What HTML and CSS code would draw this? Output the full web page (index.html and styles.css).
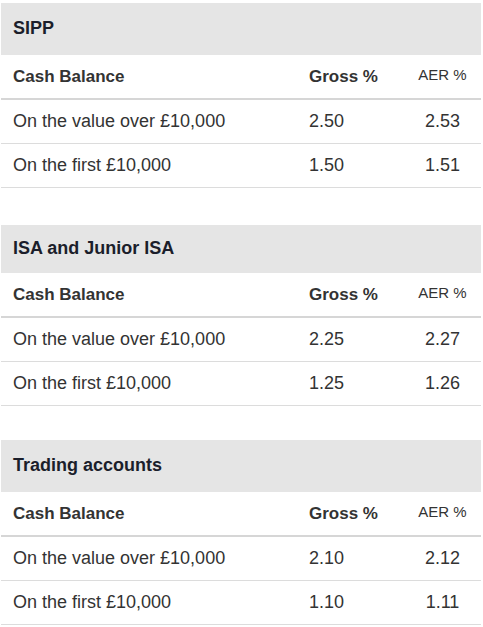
FILE: index.html
```html
<!DOCTYPE html>
<html lang="en">
<head>
<meta charset="utf-8">
<title>Cash rates</title>
<link rel="stylesheet" href="styles.css">
</head>
<body>
<div class="page">
  <section class="rates rates-first">
    <h2 class="rates-title">SIPP</h2>
    <div class="row row-head">
      <div class="cell cell-label">Cash Balance</div>
      <div class="cell cell-gross">Gross %</div>
      <div class="cell cell-aer">AER %</div>
    </div>
    <div class="row">
      <div class="cell cell-label">On the value over £10,000</div>
      <div class="cell cell-gross">2.50</div>
      <div class="cell cell-aer">2.53</div>
    </div>
    <div class="row">
      <div class="cell cell-label">On the first £10,000</div>
      <div class="cell cell-gross">1.50</div>
      <div class="cell cell-aer">1.51</div>
    </div>
  </section>

  <section class="rates rates-compact">
    <h2 class="rates-title">ISA and Junior ISA</h2>
    <div class="row row-head">
      <div class="cell cell-label">Cash Balance</div>
      <div class="cell cell-gross">Gross %</div>
      <div class="cell cell-aer">AER %</div>
    </div>
    <div class="row">
      <div class="cell cell-label">On the value over £10,000</div>
      <div class="cell cell-gross">2.25</div>
      <div class="cell cell-aer">2.27</div>
    </div>
    <div class="row">
      <div class="cell cell-label">On the first £10,000</div>
      <div class="cell cell-gross">1.25</div>
      <div class="cell cell-aer">1.26</div>
    </div>
  </section>

  <section class="rates rates-last">
    <h2 class="rates-title">Trading accounts</h2>
    <div class="row row-head">
      <div class="cell cell-label">Cash Balance</div>
      <div class="cell cell-gross">Gross %</div>
      <div class="cell cell-aer">AER %</div>
    </div>
    <div class="row">
      <div class="cell cell-label">On the value over £10,000</div>
      <div class="cell cell-gross">2.10</div>
      <div class="cell cell-aer">2.12</div>
    </div>
    <div class="row">
      <div class="cell cell-label">On the first £10,000</div>
      <div class="cell cell-gross">1.10</div>
      <div class="cell cell-aer">1.11</div>
    </div>
  </section>
</div>
</body>
</html>
```

FILE: styles.css
```css
html, body {
  margin: 0;
  padding: 0;
  background: #ffffff;
}

body {
  font-family: "Liberation Sans", Arial, sans-serif;
  color: #333333;
}

.page {
  width: 480px;
  padding: 3px 2px 0 1px;
  display: flex;
  flex-direction: column;
}

.rates {
  display: flex;
  flex-direction: column;
}

.rates-compact {
  margin-top: 37px;
}

.rates-last {
  margin-top: 34px;
}

.rates-title {
  margin: 0;
  height: 52px;
  display: flex;
  align-items: center;
  padding: 0 12px 2px;
  box-sizing: border-box;
  background: #e5e5e5;
  font-size: 18px;
  font-weight: bold;
  color: #1b1e2b;
}

.rates-compact .rates-title {
  height: 48px;
}

.row {
  display: grid;
  grid-template-columns: 296px 107px 77px;
  height: 43px;
  border-bottom: 1px solid #dcdcdc;
  align-items: center;
  font-size: 18px;
}

.row-head {
  border-bottom: 2px solid #d6d6d6;
  font-size: 17px;
  font-weight: bold;
}

.cell-label {
  padding-left: 12px;
}

.cell-gross {
  padding-left: 12px;
}

.cell-aer {
  text-align: center;
}

.row-head .cell-aer {
  font-weight: normal;
  font-size: 15px;
  padding-bottom: 4px;
}
```
